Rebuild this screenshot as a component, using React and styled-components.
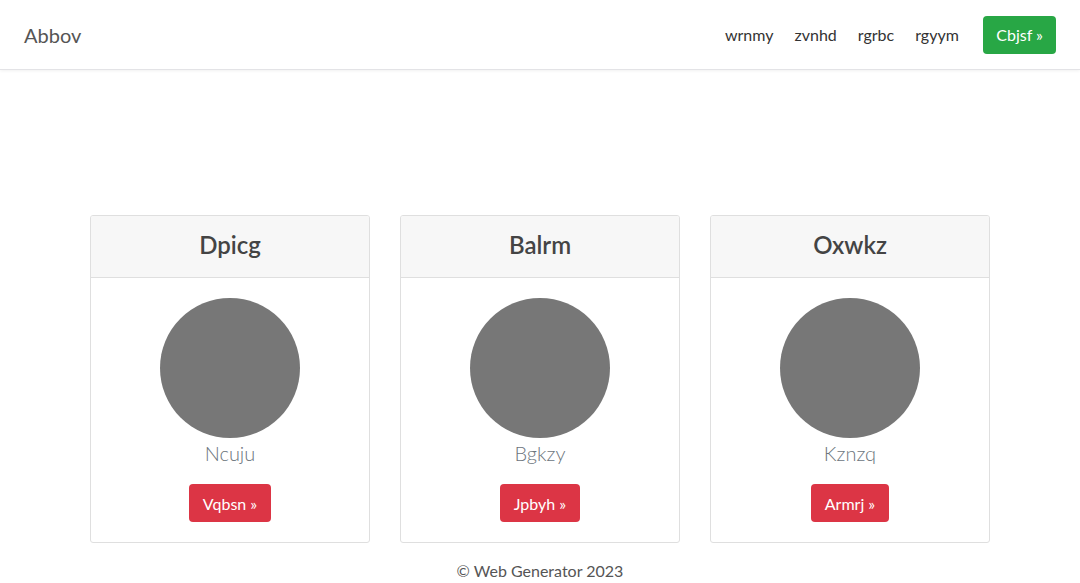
import React from "react";
import styled, { createGlobalStyle } from "styled-components";

const GlobalStyle = createGlobalStyle`
  body {
    margin: 0;
    background: #ffffff;
    font-family: "Lato", "Open Sans", sans-serif;
    color: #333;
  }
`;

const people = [
  { title: "Dpicg", name: "Ncuju", action: "Vqbsn" },
  { title: "Balrm", name: "Bgkzy", action: "Jpbyh" },
  { title: "Oxwkz", name: "Kznzq", action: "Armrj" },
];

const navLinks = ["wrnmy", "zvnhd", "rgrbc", "rgyym"];

const App = () => {
  return (
    <Page>
      <GlobalStyle />
      <Navbar>
        <Brand>Abbov</Brand>
        <NavRight>
          {navLinks.map((link) => (
            <NavLink key={link}>{link}</NavLink>
          ))}
          <Button $variant="green">Cbjsf »</Button>
        </NavRight>
      </Navbar>
      <Main>
        <CardRow>
          {people.map((p) => (
            <Card key={p.title}>
              <CardHeader>{p.title}</CardHeader>
              <CardBody>
                <Avatar />
                <Name>{p.name}</Name>
                <Button $variant="red">{p.action} »</Button>
              </CardBody>
            </Card>
          ))}
        </CardRow>
        <Footer>© Web Generator 2023</Footer>
      </Main>
    </Page>
  );
};

const Page = styled.div`
  min-height: 583px;
`;

const Navbar = styled.nav`
  height: 70px;
  padding: 0 24px;
  display: flex;
  align-items: center;
  justify-content: space-between;
  box-sizing: border-box;
  border-bottom: 1px solid #e3e3e6;
  box-shadow: 0 1px 3px rgba(0, 0, 0, 0.06);
`;

const Brand = styled.div`
  font-size: 20px;
  color: #555;
`;

const NavRight = styled.div`
  display: flex;
  align-items: center;
`;

const NavLink = styled.span`
  font-size: 16px;
  color: #333;
  padding: 0 10.5px;
  &:last-of-type {
    margin-right: 14px;
  }
`;

const Button = styled.div`
  display: inline-flex;
  align-items: center;
  height: 38px;
  box-sizing: border-box;
  padding: 0 ${(p) => (p.$variant === "green" ? "13px" : "14px")};
  border-radius: 4px;
  font-size: 16px;
  color: #fff;
  background: ${(p) => (p.$variant === "green" ? "#28a745" : "#dc3545")};
`;

const Main = styled.main`
  padding-top: 145px;
  display: flex;
  flex-direction: column;
  align-items: center;
`;

const CardRow = styled.div`
  display: flex;
  gap: 30px;
`;

const Card = styled.div`
  width: 280px;
  height: 328px;
  box-sizing: border-box;
  border: 1px solid #dfdfdf;
  border-radius: 3px;
  overflow: hidden;
  display: flex;
  flex-direction: column;
`;

const CardHeader = styled.div`
  height: 62px;
  box-sizing: border-box;
  padding-bottom: 5px;
  background: #f7f7f7;
  border-bottom: 1px solid #dfdfdf;
  display: flex;
  align-items: center;
  justify-content: center;
  font-size: 24px;
  font-weight: 600;
  color: #444;
`;

const CardBody = styled.div`
  padding-top: 20px;
  display: flex;
  flex-direction: column;
  align-items: center;
`;

const Avatar = styled.div`
  width: 140px;
  height: 140px;
  border-radius: 50%;
  background: #777777;
`;

const Name = styled.div`
  margin-top: 2px;
  font-size: 20px;
  font-weight: 300;
  color: #6c757d;
  line-height: 26px;
  margin-bottom: 18px;
`;

const Footer = styled.footer`
  margin-top: 18px;
  font-size: 16px;
  color: #555;
`;

export default App;
